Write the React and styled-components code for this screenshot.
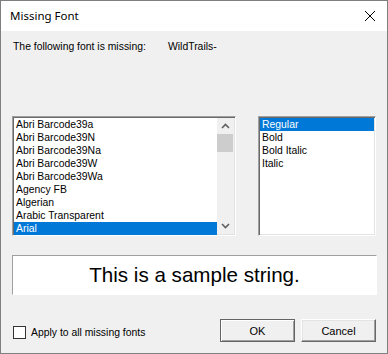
import React from "react";
import styled, { createGlobalStyle } from "styled-components";

const GlobalStyle = createGlobalStyle`
  html, body {
    margin: 0;
    padding: 0;
    background: #f0f0f0;
  }
  * {
    box-sizing: border-box;
  }
`;

const fonts = [
  "Abri Barcode39a",
  "Abri Barcode39N",
  "Abri Barcode39Na",
  "Abri Barcode39W",
  "Abri Barcode39Wa",
  "Agency FB",
  "Algerian",
  "Arabic Transparent",
  "Arial",
];

const styles = ["Regular", "Bold", "Bold Italic", "Italic"];

const App = () => {
  return (
    <>
      <GlobalStyle />
      <Window>
        <TitleBar>
          <Title>Missing Font</Title>
          <CloseIcon width="12" height="12" viewBox="0 0 12 12">
            <path d="M1 1 L11 11 M11 1 L1 11" stroke="#000" strokeWidth="1" />
          </CloseIcon>
        </TitleBar>
        <Body>
          <MissingRow>
            <Label>The following font is missing:</Label>
            <span>WildTrails-</span>
          </MissingRow>
          <Lists>
            <ListBox $width={224}>
              <Items>
                {fonts.map((f) => (
                  <Item key={f} $selected={f === "Arial"}>
                    {f}
                  </Item>
                ))}
              </Items>
              <ScrollBar>
                <Arrow>
                  <svg width="9" height="6" viewBox="0 0 9 6">
                    <path d="M1 5 L4.5 1.5 L8 5" stroke="#606060" strokeWidth="1.6" fill="none" />
                  </svg>
                </Arrow>
                <Thumb />
                <Track />
                <Arrow>
                  <svg width="9" height="6" viewBox="0 0 9 6">
                    <path d="M1 1 L4.5 4.5 L8 1" stroke="#606060" strokeWidth="1.6" fill="none" />
                  </svg>
                </Arrow>
              </ScrollBar>
            </ListBox>
            <ListBox $width={118}>
              <Items>
                {styles.map((s) => (
                  <Item key={s} $selected={s === "Regular"}>
                    {s}
                  </Item>
                ))}
              </Items>
            </ListBox>
          </Lists>
          <Sample>This is a sample string.</Sample>
          <Footer>
            <CheckLabel>
              <CheckBox />
              Apply to all missing fonts
            </CheckLabel>
            <Buttons>
              <Button $default>OK</Button>
              <Button>Cancel</Button>
            </Buttons>
          </Footer>
        </Body>
      </Window>
    </>
  );
};

export default App;

const Window = styled.div`
  width: 388px;
  height: 354px;
  border: 1px solid #7f7f7f;
  background: #f0f0f0;
  display: flex;
  flex-direction: column;
  font-family: "Liberation Sans", Arial, sans-serif;
  font-size: 10.4px;
  color: #000;
`;

const TitleBar = styled.div`
  height: 30px;
  background: #fff;
  display: flex;
  align-items: center;
  justify-content: space-between;
  padding: 0 11px 0 9px;
`;

const Title = styled.span`
  font-family: "Noto Sans", "Open Sans", sans-serif;
  font-size: 11.5px;
  color: #000;
  margin-top: -1px;
`;

const CloseIcon = styled.svg`
  display: block;
  margin-top: -1px;
`;

const Body = styled.div`
  padding: 9px 0 0 11px;
  display: flex;
  flex-direction: column;
`;

const MissingRow = styled.div`
  display: flex;
  height: 13px;
  line-height: 13px;
  padding-left: 1px;
`;

const Label = styled.span`
  width: 155px;
`;

const Lists = styled.div`
  display: flex;
  gap: 22px;
  margin-top: 63px;
`;

const ListBox = styled.div`
  width: ${(p) => p.$width}px;
  height: 120px;
  background: #fff;
  border-style: solid;
  border-width: 1px;
  border-color: #a0a0a0 #fff #fff #a0a0a0;
  box-shadow: inset 1px 1px 0 #696969, inset -1px -1px 0 #e3e3e3;
  padding: 1px;
  display: flex;
`;

const Items = styled.div`
  flex: 1;
  display: flex;
  flex-direction: column;
`;

const Item = styled.div`
  height: 13px;
  line-height: 13px;
  padding-left: 2px;
  white-space: nowrap;
  background: ${(p) => (p.$selected ? "#0078d7" : "transparent")};
  color: ${(p) => (p.$selected ? "#fff" : "#000")};
`;

const ScrollBar = styled.div`
  width: 17px;
  background: #f0f0f0;
  display: flex;
  flex-direction: column;
`;

const Arrow = styled.div`
  height: 16px;
  display: flex;
  align-items: center;
  justify-content: center;
`;

const Thumb = styled.div`
  height: 18px;
  margin: 0 1px 0 0;
  background: #cdcdcd;
`;

const Track = styled.div`
  flex: 1;
`;

const Sample = styled.div`
  margin-top: 19px;
  width: 365px;
  height: 40px;
  background: #fff;
  border-style: solid;
  border-width: 1px;
  border-color: #a0a0a0 #fff #fff #a0a0a0;
  display: flex;
  align-items: center;
  justify-content: center;
  font-family: "Liberation Sans", Arial, sans-serif;
  font-size: 20.6px;
  padding-bottom: 1px;
`;

const Footer = styled.div`
  margin-top: 24px;
  width: 365px;
  display: flex;
  align-items: flex-start;
  justify-content: space-between;
`;

const CheckLabel = styled.label`
  display: flex;
  align-items: center;
  gap: 5px;
  margin-top: 7px;
  padding-left: 1px;
  line-height: 13px;
`;

const CheckBox = styled.span`
  width: 13px;
  height: 13px;
  background: #fff;
  border: 1px solid #333;
`;

const Buttons = styled.div`
  display: flex;
  gap: 6px;
  margin-right: 1px;
`;

const Button = styled.button`
  width: 75px;
  height: 23px;
  padding: 0;
  font-family: "Liberation Sans", Arial, sans-serif;
  font-size: 11px;
  color: #000;
  background: #f0f0f0;
  border-style: solid;
  border-width: 1px;
  border-color: ${(p) => (p.$default ? "#646464" : "#fff #696969 #696969 #fff")};
  box-shadow: ${(p) =>
    p.$default
      ? "inset 1px 1px 0 #fff, inset -1px -1px 0 #a0a0a0"
      : "inset -1px -1px 0 #a0a0a0, inset 1px 1px 0 #e3e3e3"};
`;
